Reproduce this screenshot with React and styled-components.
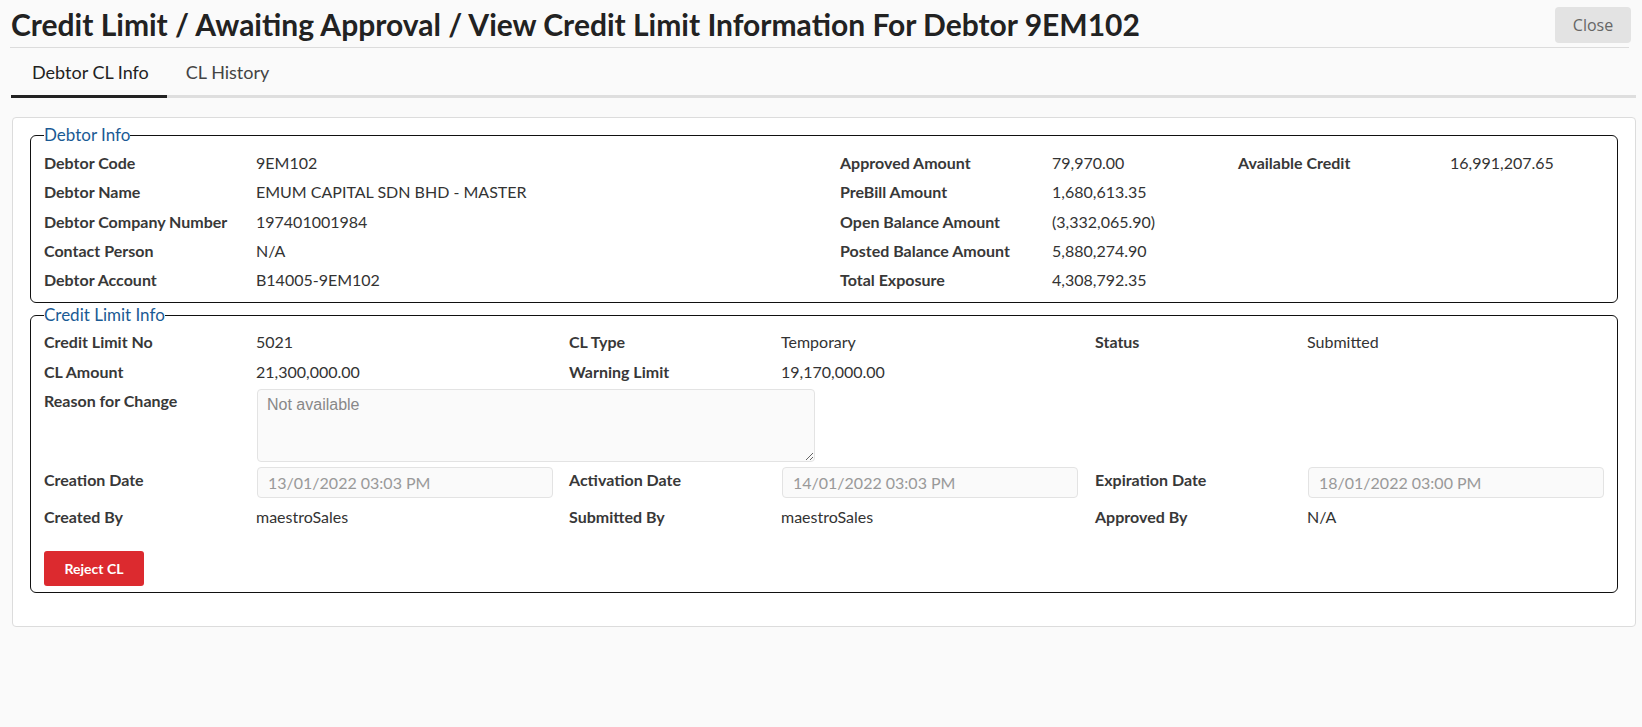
import React from "react";
import styled, { createGlobalStyle } from "styled-components";

const Global = createGlobalStyle`
  html, body {
    margin: 0;
    background: #fafafa;
    font-family: Lato, "Open Sans", sans-serif;
    color: #333;
  }
  * { box-sizing: border-box; }
`;

const Page = styled.div`
  width: 1636px;
  padding-left: 10px;
`;

const Header = styled.div`
  display: flex;
  align-items: center;
  justify-content: space-between;
  height: 48px;
  border-bottom: 1px solid #dcdcdc;
  margin-right: 7px;
`;

const Title = styled.h1`
  margin: 0 0 0 1px;
  font-family: Lato, sans-serif;
  font-weight: 700;
  font-size: 30px;
  color: #222;
`;

const CloseButton = styled.button`
  width: 76px;
  height: 36px;
  margin-right: -2px;
  margin-top: 2px;
  border: none;
  border-radius: 4px;
  background: #e3e3e3;
  color: #666;
  font-family: "Open Sans", sans-serif;
  font-size: 16px;
`;

const Tabs = styled.div`
  display: flex;
  margin-left: 1px;
  border-bottom: 3px solid #dedede;
`;

const Tab = styled.div`
  height: 50px;
  padding: 0 18px 0 21px;
  display: flex;
  align-items: center;
  font-size: 18px;
  color: ${(p) => (p.active ? "#222" : "#444")};
  margin-bottom: -3px;
  border-bottom: 3px solid ${(p) => (p.active ? "#222" : "transparent")};
  & + & { padding-left: 19px; }
`;

const Card = styled.div`
  margin: 19px 0 0 2px;
  background: #fff;
  border: 1px solid #dcdcdc;
  border-radius: 4px;
  padding: 7px 17px 31px 17px;
`;

const Fieldset = styled.fieldset`
  margin: 0 0 2px;
  padding: ${(p) => p.top}px 13px ${(p) => p.bottom}px 13px;
  border: 1px solid #111;
  border-radius: 6px;
  min-width: 0;
`;

const Legend = styled.legend`
  padding: 0;
  font-size: 17px;
  line-height: 20px;
  color: #1a5a94;
`;

const Grid = styled.div`
  display: grid;
  grid-template-columns: ${(p) => p.cols};
`;

const Column = styled.div`
  display: flex;
  flex-direction: column;
`;

const Row = styled.div`
  display: flex;
  align-items: flex-start;
  min-height: 29.3px;
  grid-column: ${(p) => p.span || "auto"};
`;

const Label = styled.div`
  width: 212px;
  flex: none;
  font-size: 16px;
  line-height: 29.3px;
  font-weight: 700;
  color: #383838;
`;

const Value = styled.div`
  font-size: 16px;
  line-height: 29.3px;
  color: #333;
`;

const TextArea = styled.textarea`
  width: 558px;
  height: 73px;
  margin: 3px 0 3px 1px;
  padding: 6px 9px;
  border: 1px solid #e3e3e3;
  border-radius: 4px;
  background: #fafafa;
  font-family: "Liberation Sans", Arial, sans-serif;
  font-size: 16px;
  resize: both;
  &::placeholder { color: #888; }
`;

const DateInput = styled.input`
  width: 296px;
  height: 31.4px;
  margin: 2px 0 3.3px 1px;
  padding: 0 10px;
  border: 1px solid #e3e3e3;
  border-radius: 4px;
  background: #fafafa;
  font-family: Lato, sans-serif;
  font-size: 16px;
  color: #999;
`;

const RejectButton = styled.button`
  margin-top: 20px;
  width: 100px;
  height: 35px;
  border: none;
  border-radius: 3px;
  background: #dc2a2f;
  color: #fff;
  font-family: Lato, sans-serif;
  font-weight: 700;
  font-size: 14px;
`;

const debtorLeft = [
  ["Debtor Code", "9EM102"],
  ["Debtor Name", "EMUM CAPITAL SDN BHD - MASTER"],
  ["Debtor Company Number", "197401001984"],
  ["Contact Person", "N/A"],
  ["Debtor Account", "B14005-9EM102"],
];

const debtorMid = [
  ["Approved Amount", "79,970.00"],
  ["PreBill Amount", "1,680,613.35"],
  ["Open Balance Amount", "(3,332,065.90)"],
  ["Posted Balance Amount", "5,880,274.90"],
  ["Total Exposure", "4,308,792.35"],
];

const Pair = ({ label, value }) => (
  <Row>
    <Label>{label}</Label>
    <Value>{value}</Value>
  </Row>
);

const DateRow = ({ label, value }) => (
  <Row>
    <Label>{label}</Label>
    <DateInput readOnly value={value} />
  </Row>
);

export default function App() {
  return (
    <Page>
      <Global />
      <Header>
        <Title>Credit Limit / Awaiting Approval / View Credit Limit Information For Debtor 9EM102</Title>
        <CloseButton>Close</CloseButton>
      </Header>
      <Tabs>
        <Tab active>Debtor CL Info</Tab>
        <Tab>CL History</Tab>
      </Tabs>
      <Card>
        <Fieldset top={3} bottom={8}>
          <Legend>Debtor Info</Legend>
          <Grid cols="796px 398px 1fr">
            <Column>
              {debtorLeft.map(([l, v]) => <Pair key={l} label={l} value={v} />)}
            </Column>
            <Column>
              {debtorMid.map(([l, v]) => <Pair key={l} label={l} value={v} />)}
            </Column>
            <Column>
              <Pair label="Available Credit" value="16,991,207.65" />
            </Column>
          </Grid>
        </Fieldset>
        <Fieldset top={2} bottom={6}>
          <Legend>Credit Limit Info</Legend>
          <Grid cols="525px 526px 1fr">
            <Pair label="Credit Limit No" value="5021" />
            <Pair label="CL Type" value="Temporary" />
            <Pair label="Status" value="Submitted" />
            <Pair label="CL Amount" value="21,300,000.00" />
            <Pair label="Warning Limit" value="19,170,000.00" />
            <div />
            <Row span="1 / span 3">
              <Label>Reason for Change</Label>
              <TextArea placeholder="Not available" readOnly />
            </Row>
            <DateRow label="Creation Date" value="13/01/2022 03:03 PM" />
            <DateRow label="Activation Date" value="14/01/2022 03:03 PM" />
            <DateRow label="Expiration Date" value="18/01/2022 03:00 PM" />
            <Pair label="Created By" value="maestroSales" />
            <Pair label="Submitted By" value="maestroSales" />
            <Pair label="Approved By" value="N/A" />
          </Grid>
          <RejectButton>Reject CL</RejectButton>
        </Fieldset>
      </Card>
    </Page>
  );
}
